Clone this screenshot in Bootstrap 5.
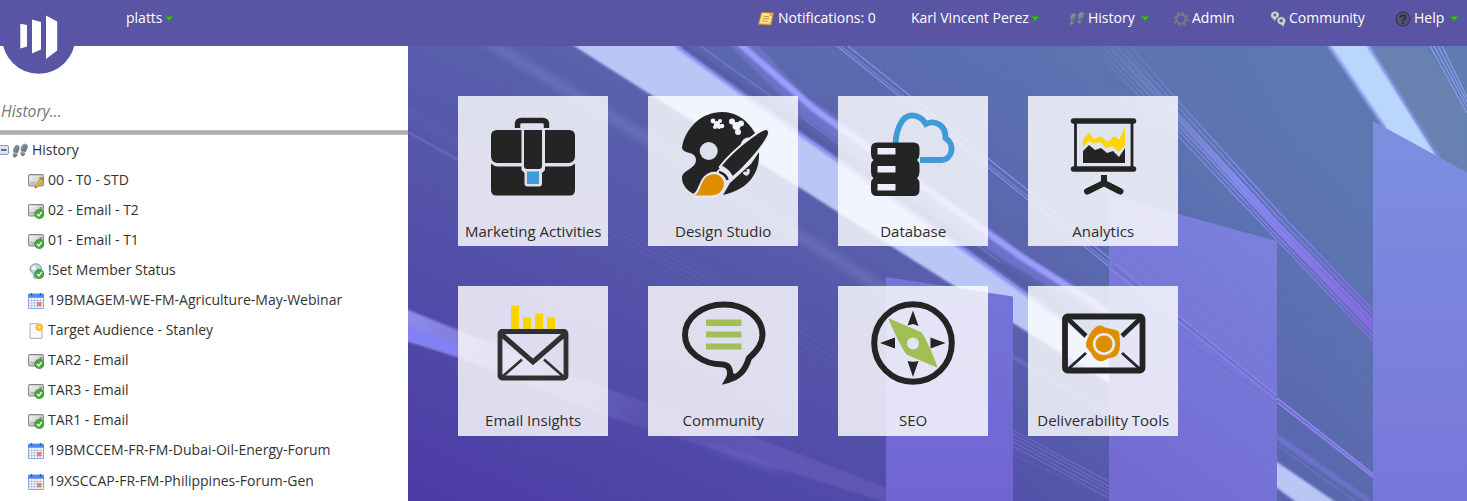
<!DOCTYPE html>
<html lang="en">
<head>
<meta charset="utf-8">
<title>Marketing workspace</title>
<link href="https://cdn.jsdelivr.net/npm/bootstrap@5.3.0/dist/css/bootstrap.min.css" rel="stylesheet">
<style>
body{font-family:"Open Sans","Noto Sans",sans-serif;font-size:14px;color:#333;height:501px;line-height:20px}
.topbar{height:46px;background:#5a54a4;color:#fff;display:grid;grid-template-columns:126px 632px 153px 158px 104px 97px 125px 72px}
.topbar>a{color:#fff;text-decoration:none;height:36px;white-space:nowrap}
.logo{width:76px;height:76px;margin-left:1px}
.caret{width:8px;height:7px;flex:none;margin-left:2px}
.caret-far{margin-left:6px}
.ico{width:16px;height:16px;flex:none}
.topbar .ico{margin-right:3px;margin-top:2px}
.topbar .note-ico{margin-right:4px}
.sidebar{width:408px;flex:none}
.search{font-style:italic;color:#777;height:84px;padding:55px 0 0 1px;font-size:15.7px}
.rule{height:5px;background:linear-gradient(#c4c4c8,#acacb0 30%,#acacb0 70%,#c8c8cc)}
.tree{line-height:20px}
.tree li{height:30.05px;padding-left:28px}
.tree li:first-child{padding-left:0}
.tree .ico{margin-top:2px}
.stage{height:455px}
.scene{width:1059px;height:455px;left:0;top:0}
.tiles{display:grid;grid-template-columns:repeat(4,150px);column-gap:40px;row-gap:40.3px;padding:50px 0 0 50.2px}
.tile{height:150px;background:rgba(255,255,255,.81);color:#2c2c2c;text-decoration:none;text-align:center;font-size:15px}
.tile svg{width:150px;height:125px;flex:none}
.tile span{white-space:nowrap}
.tile:nth-child(n+5) span{margin-top:-1px}
</style>
</head>
<body class="overflow-hidden">
<svg width="0" height="0" class="position-absolute">
<defs>
<linearGradient id="gGrey" x2="1" y2="1"><stop stop-color="#f8f8f8"/><stop offset="1" stop-color="#b4b8bc"/></linearGradient>
<linearGradient id="gFoot" x2="1" y2="1"><stop stop-color="#9fb0bb"/><stop offset="1" stop-color="#4c5d6c"/></linearGradient>
<symbol id="caret" viewBox="0 0 7 6"><path d="M0 1Q0 0 1.200.3 3.500 1.500 5.800.3 7 0 7 1.200L3.800 5.600H3.200Z" fill="#2f9a2b"/><path d="M1 1.300 3.500 2.400 6 1.300 4 3.800Z" fill="#6cc644"/></symbol>
<symbol id="feet" viewBox="0 0 16 16"><g fill="url(#gFoot)" stroke="#5d6c78" stroke-width=".4"><path d="M4 2.500C6 1.500 7.700 3 7.200 5.200L5.700 10 1.500 9.200C1 6.500 2 3.500 4 2.500Z"/><path d="M1.400 10.300 5.300 11C5.200 13 4 14.700 2.500 14.300.8 13.900.8 12 1.400 10.300Z"/><path d="M11.500 1.200C14 .3 16 1.800 15.500 4.400L13.500 9 9 8C8.500 5.500 9.300 2.200 11.500 1.200Z"/><path d="M8.900 9 13 9.900C12.700 12 11.600 13.200 10.200 12.900 8.600 12.500 8.500 10.500 8.900 9Z"/></g></symbol>
<symbol id="mail" viewBox="0 0 16 16"><rect x=".6" y="1.600" width="14.800" height="11.400" rx="1.500" fill="url(#gGrey)" stroke="#858585" stroke-width="1.100"/><path d="M2.500 9.500H7M2.500 11H6" stroke="#999" stroke-width=".7"/><path d="M11.500 4H14V7.500H11.500Z" fill="#8e9a68"/></symbol>
<symbol id="ok" viewBox="0 0 16 16"><circle cx="11.300" cy="11" r="4.700" fill="#4aa43f" stroke="#277820" stroke-width=".5"/><path d="M9 11 10.800 12.900 13.800 9" fill="none" stroke="#e7ffe2" stroke-width="1.500"/></symbol>
<symbol id="mailok" viewBox="0 0 16 16"><use href="#mail"/><use href="#ok"/></symbol>
<symbol id="mailedit" viewBox="0 0 16 16"><use href="#mail"/><path d="M7 15 8 11.500 13 5.500 15.500 7.500 10.200 13.800Z" fill="#e9b72f" stroke="#9c751b" stroke-width=".6"/><path d="M13 5.500 14 4.500 16 6.300 15.500 7.500Z" fill="#c9614e"/><path d="M7 15 7.500 13.300 8.600 14.300Z" fill="#333"/></symbol>
<symbol id="bulb" viewBox="0 0 16 16"><path d="M7.500.8C11 .8 13.500 3 13.500 6 13.500 9 10.500 10 10.200 12.500V15H6V12.500C5.700 10 2 9 2 6 2 3 4.500.8 7.500.8Z" fill="#c0d2dd" stroke="#8698a4"/><circle cx="6" cy="5" r="2.200" fill="#eef6fa"/><use href="#ok"/></symbol>
<symbol id="cal" viewBox="0 0 16 16"><path d="M.5 1.500H15.500V15.500H.5Z" fill="#fafcff" stroke="#8ca6d5"/><path d="M.3 .6H15.700V4.800H.3Z" fill="#5288ea"/><path d="M3.500 0V3M12.500 0V3" stroke="#2c5cb8" stroke-width="1.300"/><path d="M1 7.500H15M1 10H15M1 12.700H15M3.700 5V15M6.500 5V15M9.300 5V15M12.200 5V15" stroke="#a9bcdf" stroke-width=".8"/><path d="M9 9H13.500V13.300H9Z" fill="#ee7f65"/></symbol>
<symbol id="doc" viewBox="0 0 16 16"><path d="M2 .7H10.500L14 4V15.300H2Z" fill="#f8fafb" stroke="#a8aeb4"/><circle cx="11.200" cy="4.300" r="3.700" fill="#ffb93a"/><circle cx="11.200" cy="4.300" r="1.600" fill="#ffe16b"/></symbol>
<symbol id="note" viewBox="0 0 16 16"><path d="M3.500 1.500 15.300 2 13 14 .5 13.200Z" fill="#f3c84d" stroke="#c28b24" stroke-width=".8"/><path d="M4.500 2 14.300 2.700 12.500 10 10 12.500 2 12Z" fill="#fbe68f"/><path d="M5.200 5.200 11 5.700M4.600 7.500 11.500 8M4.200 10 9.500 10.300" stroke="#a8812e" stroke-width=".8"/><circle cx="13" cy="3.500" r="1.700" fill="#ffa13b"/></symbol>
<symbol id="gear" viewBox="0 0 16 16"><circle cx="8" cy="8" r="4.600" fill="none" stroke="#77758c" stroke-width="2.200"/><circle cx="8" cy="8" r="6.400" fill="none" stroke="#77758c" stroke-width="2" stroke-dasharray="2.500 2.526"/></symbol>
<symbol id="talk" viewBox="0 0 16 16"><path d="M5 .6C8.500.6 9.300 3 8.800 4.800 8 7.300 5.500 6.800 4.800 10.200L2.800 7.300C-.5 5.500.5.6 5 .6Z" fill="#cad7dc" stroke="#7b8c9d" stroke-width=".5"/><circle cx="4.800" cy="3.900" r="1.500" fill="#566b79"/><path d="M11 6C14.800 6 16.200 9 15 11.500 14.300 13.200 13.800 13.200 13.800 15.800L11 13.500C7.800 13 6.800 10.700 7.500 8.600 8.200 6.800 9.500 6 11 6Z" fill="#cad7dc" stroke="#7b8c9d" stroke-width=".5"/><circle cx="11.200" cy="9.700" r="1.800" fill="#566b79"/></symbol>
<symbol id="help" viewBox="0 0 16 16"><circle cx="8" cy="8" r="6.900" fill="#565172" stroke="#3b384e" stroke-width="1.300"/><path d="M5.500 6.500C5.500 3.600 10.500 3.600 10.500 6.300 10.500 8 8 8 8 10M8 11.300V13" fill="none" stroke="#2c2a3b" stroke-width="1.800"/></symbol>
</defs>
</svg>

<nav class="topbar position-relative z-3">
  <div><svg class="logo" viewBox="0 0 76 76"><circle cx="37.700" cy="37" r="36.700" fill="#5a54a4"/><g fill="#fff"><path d="M19.300 23.800 26 25V46.500L19.300 48.500Z"/><path d="M31 19.500 40 22V49.500L31 53.500Z"/><path d="M45 15.500 56.200 21.500V50.500L45 59Z"/></g></svg></div>
  <a href="#" class="d-flex align-items-center"><span>platts</span><svg class="caret"><use href="#caret"/></svg></a>
  <a href="#" class="d-flex align-items-center"><svg class="ico note-ico"><use href="#note"/></svg><span>Notifications: 0</span></a>
  <a href="#" class="d-flex align-items-center"><span>Karl Vincent Perez</span><svg class="caret"><use href="#caret"/></svg></a>
  <a href="#" class="d-flex align-items-center"><svg class="ico"><use href="#feet"/></svg><span>History</span><svg class="caret caret-far"><use href="#caret"/></svg></a>
  <a href="#" class="d-flex align-items-center"><svg class="ico"><use href="#gear"/></svg><span>Admin</span></a>
  <a href="#" class="d-flex align-items-center"><svg class="ico"><use href="#talk"/></svg><span>Community</span></a>
  <a href="#" class="d-flex align-items-center"><svg class="ico"><use href="#help"/></svg><span>Help</span><svg class="caret caret-far"><use href="#caret"/></svg></a>
</nav>

<div class="d-flex">
  <aside class="sidebar bg-white">
    <div class="search">History...</div>
    <div class="rule"></div>
    <ul class="tree list-unstyled mb-0">
      <li class="d-flex align-items-center"><svg width="12" height="16" viewBox="0 0 12 16"><rect x="-1" y="3.500" width="9.500" height="9" rx="1.500" fill="#dce4ef" stroke="#8b9ab8"/><path d="M1 8H6.500" stroke="#34486d" stroke-width="1.500"/></svg><svg class="ico me-1"><use href="#feet"/></svg>History</li>
      <li class="d-flex align-items-center"><svg class="ico me-1"><use href="#mailedit"/></svg>00 - T0 - STD</li>
      <li class="d-flex align-items-center"><svg class="ico me-1"><use href="#mailok"/></svg>02 - Email - T2</li>
      <li class="d-flex align-items-center"><svg class="ico me-1"><use href="#mailok"/></svg>01 - Email - T1</li>
      <li class="d-flex align-items-center"><svg class="ico me-1"><use href="#bulb"/></svg>!Set Member Status</li>
      <li class="d-flex align-items-center"><svg class="ico me-1"><use href="#cal"/></svg>19BMAGEM-WE-FM-Agriculture-May-Webinar</li>
      <li class="d-flex align-items-center"><svg class="ico me-1"><use href="#doc"/></svg>Target Audience - Stanley</li>
      <li class="d-flex align-items-center"><svg class="ico me-1"><use href="#mailok"/></svg>TAR2 - Email</li>
      <li class="d-flex align-items-center"><svg class="ico me-1"><use href="#mailok"/></svg>TAR3 - Email</li>
      <li class="d-flex align-items-center"><svg class="ico me-1"><use href="#mailok"/></svg>TAR1 - Email</li>
      <li class="d-flex align-items-center"><svg class="ico me-1"><use href="#cal"/></svg>19BMCCEM-FR-FM-Dubai-Oil-Energy-Forum</li>
      <li class="d-flex align-items-center"><svg class="ico me-1"><use href="#cal"/></svg>19XSCCAP-FR-FM-Philippines-Forum-Gen</li>
    </ul>
  </aside>

  <main class="stage flex-grow-1 position-relative overflow-hidden">
    <svg class="scene position-absolute" viewBox="408 46 1059 455">
      <defs>
        <linearGradient id="sky" gradientUnits="userSpaceOnUse" x1="560" y1="600" x2="860" y2="-60"><stop stop-color="#4b38a5"/><stop offset=".5" stop-color="#5557aa"/><stop offset=".8" stop-color="#5a68ae"/><stop offset="1" stop-color="#5b73b1"/></linearGradient>
        <linearGradient id="warm" gradientUnits="userSpaceOnUse" x1="900" y1="350" x2="1467" y2="40"><stop stop-color="#5b6cb0" stop-opacity="0"/><stop offset="1" stop-color="#5d7db3"/></linearGradient>
        <linearGradient id="pan1" x2="0" y2="1"><stop stop-color="#7475d8"/><stop offset="1" stop-color="#7064d2"/></linearGradient>
        <linearGradient id="pan2" x1=".7" y1="0" x2=".3" y2="1"><stop stop-color="#7a82db"/><stop offset="1" stop-color="#736bd4"/></linearGradient>
        <linearGradient id="pan3" x2="0" y2="1"><stop stop-color="#7c90df"/><stop offset="1" stop-color="#7876da"/></linearGradient>
        <linearGradient id="low" gradientUnits="userSpaceOnUse" x1="408" y1="320" x2="890" y2="501"><stop stop-color="#9996f5"/><stop offset=".25" stop-color="#7672d6"/><stop offset=".5" stop-color="#5b54ae"/><stop offset=".75" stop-color="#6459ba"/><stop offset="1" stop-color="#6259b3"/></linearGradient>
        <linearGradient id="ray" gradientUnits="userSpaceOnUse" x1="1100" y1="46" x2="1373" y2="325"><stop stop-color="#8390c4" stop-opacity=".15"/><stop offset=".5" stop-color="#858cf0"/><stop offset="1" stop-color="#8b67e8"/></linearGradient>
        <filter id="soft1"><feGaussianBlur stdDeviation="1"/></filter>
        <filter id="soft3"><feGaussianBlur stdDeviation="3"/></filter>
      </defs>
      <path d="M408 46H1467V501H408Z" fill="url(#sky)"/>
      <path d="M408 46H1467V501H408Z" fill="url(#warm)"/>
      <!-- faint streaks on the left -->
      <path d="M478 42H498L608 108 700 165 890 287V300L690 172Z" fill="#8a93d0" opacity=".3" filter="url(#soft3)"/>
      <g fill="none" stroke="#8c90d8" stroke-width=".7" opacity=".25"><path d="M408 107 458 136 608 217 760 302 900 382 1109 480M408 110 458 140 608 222 760 308 900 390 1109 486M408 114 458 144 608 227 760 314 900 397 1109 492M408 118 458 148 608 232 760 320 900 404 1109 498"/><path d="M408 132 458 160" stroke-width="3"/></g>
      <!-- lower left beam -->
      <path d="M406 309 458 330 608 389 760 439 890 489 940 505H895L760 463 608 417 458 357 406 341Z" fill="url(#low)" opacity=".85" filter="url(#soft1)"/>
      <path d="M406 325 458 345V357L406 339Z" fill="#8280f5" filter="url(#soft1)"/>
      <path d="M700 444 735 452 790 474 760 467Z" fill="#7a6ee6" opacity=".55" filter="url(#soft3)"/>
      <!-- main beam -->
      <path d="M675 44 741 93 820 147 980 260 1109 353 1277 462 1340 505H1300L1277 488 1109 383 1013 323 913 260 808 193 648 93 571 44Z" fill="#b9c6f6" filter="url(#soft1)"/>
      <path d="M676 46 741 93 820 148 980 261 1109 354" fill="none" stroke="#8888f3" stroke-width="4" opacity=".75" filter="url(#soft1)"/>
      <path d="M684 46 808 132 1020 280 1109 342" fill="none" stroke="#5457a0" stroke-width="5" opacity=".6" filter="url(#soft1)"/>
      <path d="M700 46 808 122 1000 262" fill="none" stroke="#7b82dd" stroke-width="1.500" opacity=".6"/>
      <path d="M728 44H757L808 99 820 105 1033 260 1109 305 1277 433 1373 501H1365L1277 441 1109 322 1003 260 820 129 808 122Z" fill="#7477d6" opacity=".7" filter="url(#soft1)"/>
      <path d="M740 44 814 109 1020 256 1109 313" fill="none" stroke="#9b9efb" stroke-width="6.500" filter="url(#soft1)"/>
      <path d="M1277 445 1355 501" stroke="#7378c6" stroke-width="1.500" opacity=".6"/>
      <!-- thin lines -->
      <g fill="none" stroke="#858ce6" stroke-width="1.300"><path d="M837 46 1016 190 1101 260 1167 313"/><path d="M841 46 1020 190 1105 260 1167 312" stroke-width="1"/><path d="M848 46 1025 188 1109 258 1167 309"/></g>
      <g fill="none" stroke="url(#ray)" stroke-width="1.300"><path d="M1090 46 1179 137 1277 240 1373 341"/><path d="M1096 46 1179 131 1277 236 1373 336"/><path d="M1102 46 1179 126 1277 231 1373 331" stroke-width="2"/><path d="M1109 46 1179 120 1277 227 1373 327" stroke-width="3.500"/><path d="M1116 46 1179 115 1277 222 1373 321" stroke-width="3"/><path d="M1122 46 1179 108 1277 216 1373 315"/><path d="M1130 46 1179 102 1277 210 1373 310"/></g>
      <!-- top right beam -->
      <path d="M1370 46H1467V190L1430 160Z" fill="#6b84b0" opacity=".85" filter="url(#soft1)"/>
      <path d="M1327 44H1368L1442 165 1388 133Z" fill="#b9d6fc" filter="url(#soft1)"/>
      <path d="M1328 44 1385 128M1367 44 1440 158" stroke="#8589ef" stroke-width="2.500" opacity=".8" filter="url(#soft1)"/>
      <path d="M1425 44H1470V116Z" fill="#5e7bb2"/>
      <path d="M1430 46 1467 113M1434 46 1467 107M1438 46 1467 102M1442 46 1467 97" stroke="#8d9bed" stroke-width="1.200"/>
      <!-- panels -->
      <path d="M886 277 1013 296.500V501H886Z" fill="url(#pan1)"/>
      <path d="M1109 195 1277 241V501H1109Z" fill="url(#pan2)"/>
      <path d="M1373 121 1467 172.500V501H1373Z" fill="url(#pan3)"/>
      <g fill="none" stroke="#8884e8" stroke-width="1.600"><path d="M1109 268 1179 322 1277 400" stroke-opacity=".75"/><path d="M1112 266 1179 319 1277 398" stroke="#5f68c0" stroke-width="1"/><path d="M1116 264 1179 316 1277 396" stroke-opacity=".8"/><path d="M1179 336 1277 404" stroke="#8067d6" opacity=".7"/><path d="M1277 398 1373 474M1277 402 1373 477" stroke="#8d84ea" stroke-width="2"/></g>
      <g fill="none" stroke="#7977d6" stroke-width="1" opacity=".7"><path d="M1013 434 1109 486M1013 438 1109 490M1013 442 1109 494M1013 446 1109 498M1013 430 1109 482"/></g>
      <path d="M1013 357 1109 414" stroke="#7f83cf" stroke-width="4" opacity=".45" filter="url(#soft1)"/>
    </svg>

    <div class="tiles position-relative">
      <a href="#" class="tile d-flex flex-column align-items-center">
        <svg viewBox="0 0 150 125"><path d="M59.500 32V28.500Q59.500 24.500 63.500 24.500H84.500Q88.500 24.500 88.500 28.500V32" fill="none" stroke="#242424" stroke-width="5.500"/><g fill="#242424"><path d="M39 34H63.500V67H39Q33 66 33 60V40Q33 34 39 34ZM87 34H111Q117 34 117 40V60Q117 66 111 67H87Z"/><path d="M33 67.500Q36 70.500 40 70.500H63.500V74L66.500 77V87.500Q66.500 90.500 69.500 90.500H81Q84 90.500 84 87.500V77L87 74V70.500H110Q114 70.500 117 67.500V94Q117 99.500 111.500 99.500H38.500Q33 99.500 33 94Z"/><path d="M66 34H84V70Q84 73 81 73H69Q66 73 66 70Z"/></g><path d="M69 75.500H81V88H69Z" fill="#3e9bd8"/></svg>
        <span>Marketing Activities</span></a>
      <a href="#" class="tile d-flex flex-column align-items-center">
        <svg viewBox="0 0 150 125"><path d="M107 37C98 22 87 16 74 16 54 16 38 31 34 51C34 59 48 54 48 64 48 73 34 74 34 82C34 90 41 96 46 98C52 96 52 88 57 81C60 77 64 75 68 76Z" fill="#242424"/><path d="M111 56C112 76 102 93 75 99L82 87 103 68Z" fill="#242424"/><circle cx="60.700" cy="55" r="9" fill="#dddfee"/><g fill="#f1f4fd"><circle cx="65" cy="25" r="2.400"/><circle cx="69" cy="28" r="3"/><circle cx="67" cy="31" r="2"/><circle cx="72" cy="25" r="2"/><circle cx="74" cy="30" r="2.300"/><circle cx="71" cy="31" r="2"/><circle cx="84" cy="25.500" r="3"/><circle cx="93" cy="27.500" r="3"/><circle cx="88.500" cy="30" r="4"/><circle cx="90" cy="36" r="3"/></g><path d="M94 49C96 43 100 42 104 44M96 76C98 80 101 78 100 73" fill="none" stroke="#e7e8f4" stroke-width="3"/><path d="M118 34C114 34 88 52 73 71L82 82C96 72 120 43 120 37Q120 34 118 34Z" fill="#242424" stroke="#eceef8" stroke-width="4" paint-order="stroke"/><path d="M72 73Q80 77 82 84" fill="none" stroke="#e7e8f4" stroke-width="8"/><path d="M71 76Q78 78 79.500 84" fill="none" stroke="#242424" stroke-width="2.500"/><path d="M46 99.500C54 98 51 79 66 78 74 78.500 78 86 75 92 72 99 66 99.500 60 99.500Z" fill="#dd8f00" stroke="#e7e8f4" stroke-width="4" paint-order="stroke"/></svg>
        <span>Design Studio</span></a>
      <a href="#" class="tile d-flex flex-column align-items-center">
        <svg viewBox="0 0 150 125"><path d="M49.500 67Q51 61 57.500 58.500C56 34 64 19.300 74 19.300Q83 19.500 88 28C97 23.500 108 29 107.500 42C118 49 114 64 103 64H84" fill="none" stroke="#3e9bd8" stroke-width="5.800"/><path d="M82 64H86" stroke="#3e9bd8" stroke-width="5.800"/><path d="M88 24 86 31.500 92 28Z" fill="#3e9bd8"/><path d="M39 46.500H75.500Q81.500 46.500 81.500 52.500V58Q81.500 62 79 64 81.500 66 81.500 70V76Q81.500 80 79 82 81.500 84 81.500 88V94Q81.500 100 75.500 100H39Q33 100 33 94V88Q33 84 35.500 82 33 80 33 76V70Q33 66 35.500 64 33 62 33 58V52.500Q33 46.500 39 46.500Z" fill="#242424"/><path d="M39.500 52H57.500V58.500H39.500ZM39.500 70H57.500V76.500H39.500ZM39.500 88H57.500V94.500H39.500Z" fill="#eceefa"/></svg>
        <span>Database</span></a>
      <a href="#" class="tile d-flex flex-column align-items-center">
        <svg viewBox="0 0 150 125"><g fill="none" stroke="#242424"><path d="M45.500 25H105.500M45.500 73H105.500" stroke-width="5.500" stroke-linecap="round"/><path d="M47.500 25V73M104 25V73" stroke-width="2.800"/><path d="M76 79V88M59 95.500 76 87 92.500 95.500" stroke-width="6"/><path d="M59 95.500 76 87 92.500 95.500" stroke-width="6" stroke-linecap="round"/></g><path d="M55 43 61 37 66 43 73 40.500 80 46 86 40 91.500 43.500 97 31V49L91 56 84 50 78 52 72 46 66 47.500 61 45 55 51Z" fill="#fcd600"/><path d="M55 55 61 49 67 54 73 52 79 57 85 55 91 61 97 52V67H55Z" fill="#242424"/></svg>
        <span>Analytics</span></a>
      <a href="#" class="tile d-flex flex-column align-items-center">
        <svg viewBox="0 0 150 125"><path d="M53 19.500H61V44H53ZM65 31.500H73V44H65ZM77 27.500H85V44H77ZM89 31.500H97V44H89Z" fill="#fad400"/><g fill="none" stroke="#303030"><rect x="42" y="45.500" width="66" height="46.500" rx="2" stroke-width="4.800"/><path d="M43 48 75 76 107 48" stroke-width="5"/><path d="M44 91 64 73.500M106 91 86 73.500" stroke-width="2.500"/></g></svg>
        <span>Email Insights</span></a>
      <a href="#" class="tile d-flex flex-column align-items-center">
        <svg viewBox="0 0 150 125"><path d="M76 18.500C54 18.500 37 32 37 49 37 65 54 78.500 75 78.500C82 79 84 87 80 94C91 91 97 85 101 72C108 66 114.500 58 114.500 49C114.500 32 98 18.500 76 18.500Z" fill="none" stroke="#242424" stroke-width="6"/><path d="M76 96.500Q82 91 80 84L87 88Z" fill="#242424"/><path d="M58 33.500H93.500V40H58ZM58 45.500H93.500V51.500H58ZM58 57.500H93.500V63.500H58Z" fill="#a1bf55"/></svg>
        <span>Community</span></a>
      <a href="#" class="tile d-flex flex-column align-items-center">
        <svg viewBox="0 0 150 125"><circle cx="75" cy="57" r="38.800" fill="none" stroke="#242424" stroke-width="6"/><path d="M75 24.500 80.500 40 75 38 69.500 39.500ZM75 91 69.500 75Q75 76.500 80.500 75ZM42 57 57 51.500V62.500ZM107.500 57 92.500 51.500V62.500Z" fill="#242424"/><path d="M51.500 33.500 83 47C87 52 96 73 98.500 80.500L69 68C64 61 54 40 51.500 33.500Z" fill="#a1bf55" stroke="#a1bf55" stroke-width="1.500" stroke-linejoin="round"/><circle cx="75" cy="57.500" r="6" fill="#e5e4f6"/></svg>
        <span>SEO</span></a>
      <a href="#" class="tile d-flex flex-column align-items-center">
        <svg viewBox="0 0 150 125"><rect x="37" y="30.500" width="77.500" height="54" rx="2.500" fill="none" stroke="#242424" stroke-width="5.800"/><path d="M39 32 58 50M113 32 94 50" stroke="#242424" stroke-width="4.600"/><path d="M39 84 58 67M113 84 94 67" stroke="#242424" stroke-width="2.800"/><path d="M68 41Q72 38 77 41.500L88 44Q92 45 91.500 50 92 54 92 58 92 64 90 68 87 72 81 72L75 75Q69 76 65.500 71 63 66 58.500 61.500 57 57 60 52 62 46 68 41Z" fill="#dd8f00"/><circle cx="76" cy="58" r="9.800" fill="#dd8f00" stroke="#ecebf8" stroke-width="2.600"/></svg>
        <span>Deliverability Tools</span></a>
    </div>
  </main>
</div>
<script src="https://cdn.jsdelivr.net/npm/bootstrap@5.3.0/dist/js/bootstrap.bundle.min.js"></script>
</body>
</html>
